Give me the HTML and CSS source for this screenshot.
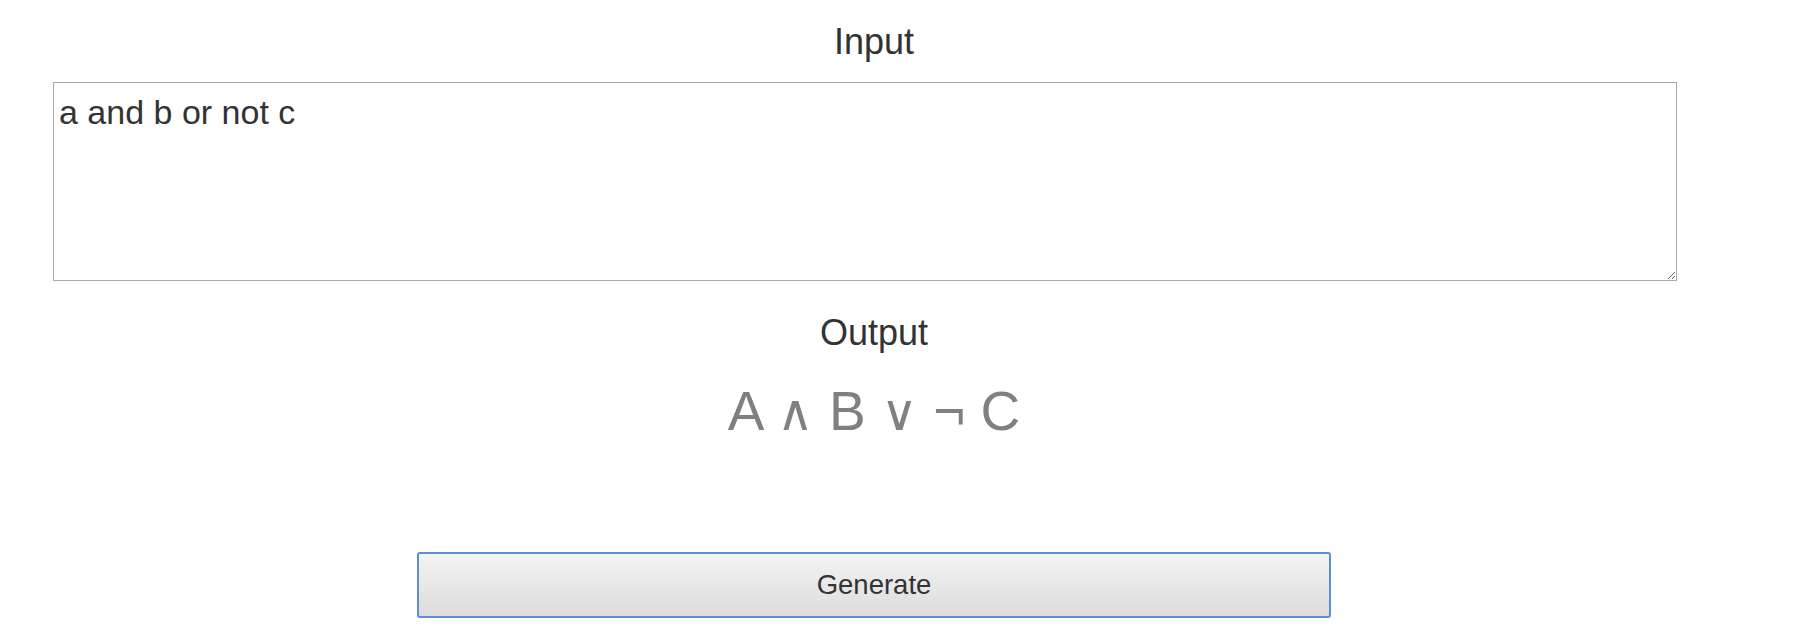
FILE: index.html
```html
<!DOCTYPE html>
<html lang="en">
<head>
<meta charset="utf-8">
<title>Logic Formatter</title>
<link rel="stylesheet" href="styles.css">
</head>
<body>
<main class="app">
  <h2 class="label label-input">Input</h2>
  <textarea class="input" spellcheck="false">a and b or not c</textarea>
  <h2 class="label label-output">Output</h2>
  <div class="formula">A <span class="op">∧</span> B <span class="op">∨</span> ¬ C</div>
  <button class="generate" type="button">Generate</button>
</main>
</body>
</html>
```

FILE: styles.css
```css
html, body {
  margin: 0;
  padding: 0;
  background: #ffffff;
}

body {
  font-family: "Liberation Sans", Arial, sans-serif;
  color: #333333;
}

.app {
  width: 1748px;
  display: flex;
  flex-direction: column;
  align-items: center;
  padding-top: 22px;
}

.label {
  margin: 0;
  font-weight: normal;
  font-size: 36px;
  line-height: 40px;
  color: #333333;
}

.input {
  align-self: flex-start;
  margin: 20px 0 0 53px;
  box-sizing: border-box;
  width: 1624px;
  height: 199px;
  border: 1px solid #a9a9a9;
  padding: 10px 5px 8px;
  font-family: "Liberation Sans", Arial, sans-serif;
  font-size: 34px;
  color: #333333;
  resize: vertical;
  outline: none;
}

.label-output {
  margin-top: 32px;
}

.formula {
  margin-top: 26px;
  height: 64px;
  font-size: 55px;
  line-height: 64px;
  color: #808080;
}

.op {
  font-family: "DejaVu Sans", sans-serif;
  font-weight: 200;
  font-size: 50px;
  line-height: 1;
}

.generate {
  margin-top: 109px;
  box-sizing: border-box;
  width: 914px;
  height: 66px;
  border: 2px solid #5b8fd9;
  border-radius: 3px;
  background: linear-gradient(#f4f4f4, #dcdcdc);
  font-family: "Liberation Sans", Arial, sans-serif;
  font-size: 27.5px;
  color: #333333;
  cursor: pointer;
}
```
